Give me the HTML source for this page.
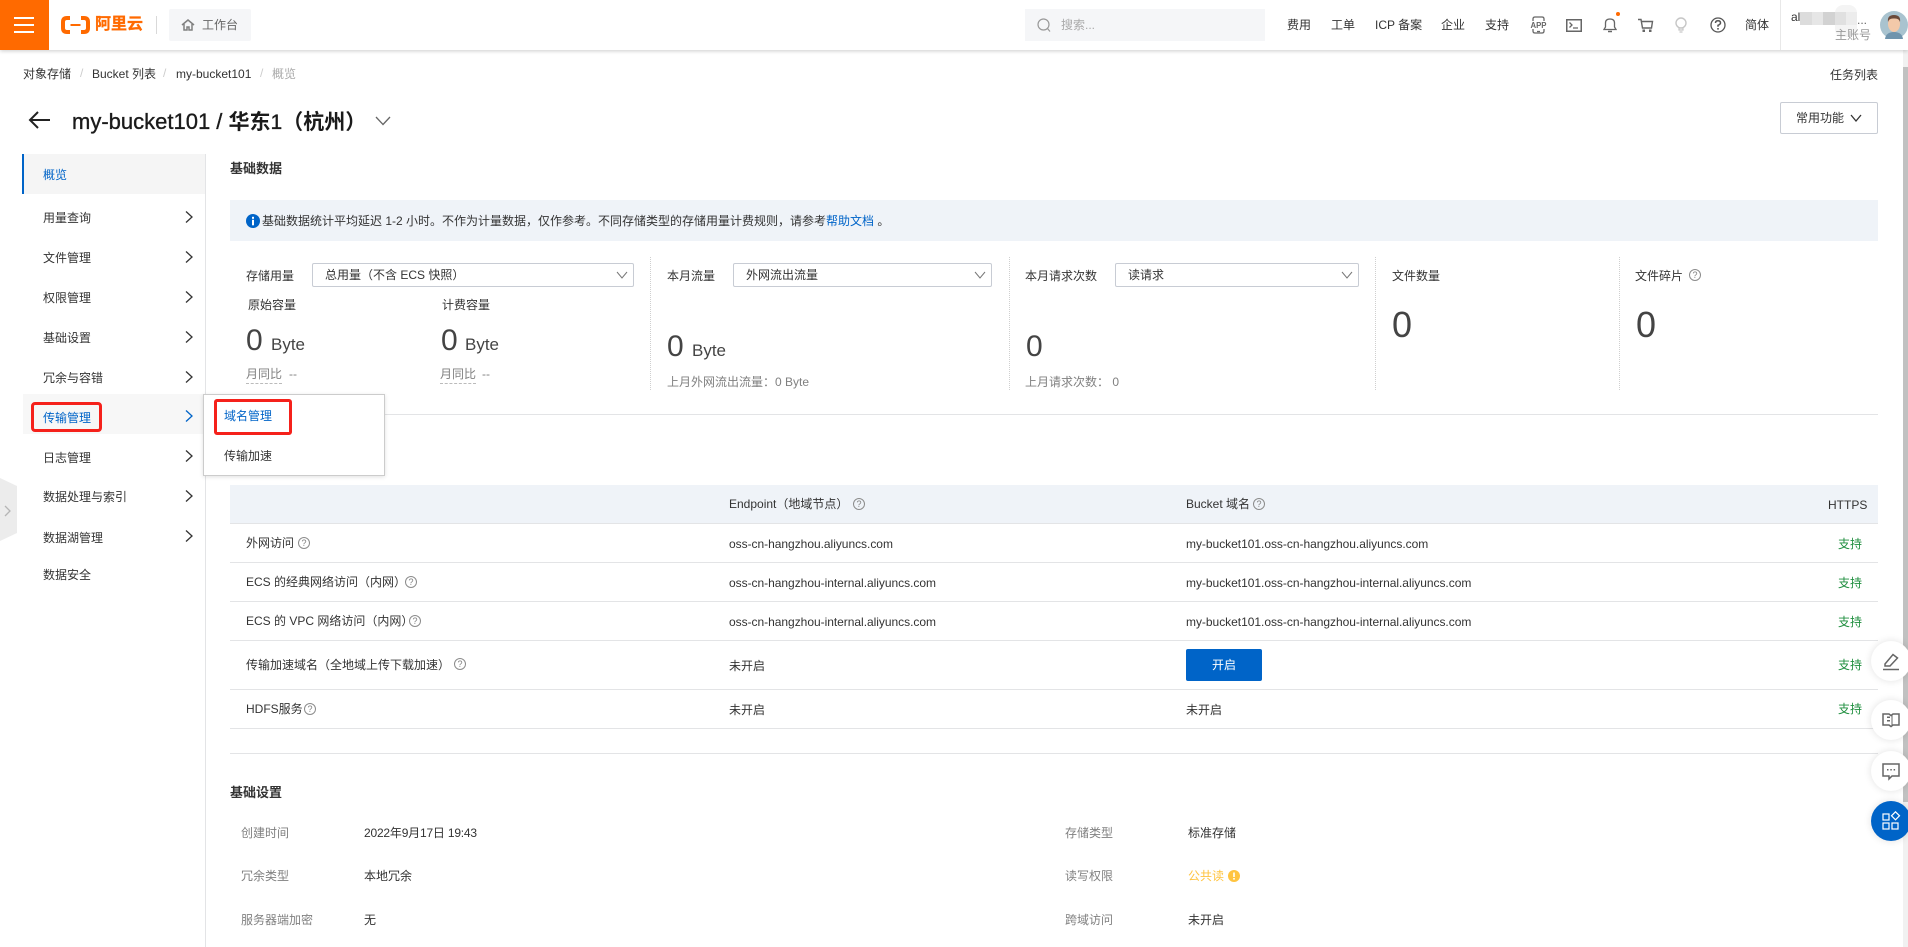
<!DOCTYPE html>
<html lang="zh-CN">
<head>
<meta charset="utf-8">
<title>my-bucket101 概览</title>
<style>
*{box-sizing:border-box}
html,body{margin:0;padding:0;width:1908px;height:947px;overflow:hidden;background:#fff}
body{position:relative;font-family:"Liberation Sans","Noto Sans CJK SC",sans-serif;font-size:12px;color:#333}
.t{position:absolute;white-space:nowrap;line-height:16px;height:16px}
.a{position:absolute}
.g{color:#808080}
.b{color:#0064c8}
.ok{color:#1e8e3e}
.line{position:absolute;height:1px;background:#e3e4e6}
.dv{position:absolute;width:0;border-left:1px dotted #cfcfcf;top:257px;height:133px}
.sel{position:absolute;top:263px;height:24px;border:1px solid #c8ccd4;border-radius:2px;background:#fff;padding-left:12px;line-height:22px;white-space:nowrap}
.sel svg{position:absolute;right:5px;top:5px}
.num{position:absolute;font-size:30px;line-height:36px;height:36px;color:#444}
.byte{position:absolute;font-size:17px;line-height:20px;height:20px;color:#444}
.big{position:absolute;font-size:36px;line-height:44px;height:44px;color:#444}
.dash{border-bottom:1px dashed #bbb;height:18px}
.q{position:absolute;width:12px;height:12px;border:1px solid #8c8c8c;border-radius:50%;font-size:9px;line-height:10px;text-align:center;color:#808080}
.h{font-size:13px;font-weight:700;color:#333}
.fab{position:absolute;left:1871px;width:40px;height:40px;border-radius:50%;background:#fff;box-shadow:0 0 8px rgba(0,0,0,.12)}
.fab svg{position:absolute;left:10px;top:10px}
</style>
</head>
<body>

<!-- scrollbar -->
<div class="a" style="left:1903px;top:50px;width:5px;height:897px;background:#f1f1f1"></div>
<div class="a" style="left:1903px;top:67px;width:5px;height:735px;background:#c1c1c1"></div>

<!-- header -->
<div class="a" style="left:0;top:0;width:1908px;height:50px;background:#fff;box-shadow:0 1px 4px rgba(0,0,0,.2)"></div>
<div class="a" style="left:0;top:0;width:49px;height:50px;background:#ff6a00"></div>
<div class="a" style="left:14px;top:17px;width:20px;height:2px;background:#fff"></div>
<div class="a" style="left:14px;top:24px;width:20px;height:2px;background:#fff"></div>
<div class="a" style="left:14px;top:31px;width:20px;height:2px;background:#fff"></div>

<svg class="a" style="left:60px;top:15px" width="31" height="20" viewBox="0 0 31 20">
<path d="M10 3H7Q3 3 3 7V13Q3 17 7 17H10" fill="none" stroke="#ff6a00" stroke-width="4"/>
<path d="M21 3H24Q28 3 28 7V13Q28 17 24 17H21" fill="none" stroke="#ff6a00" stroke-width="4"/>
<rect x="10.5" y="9" width="10" height="2" fill="#ff6a00"/>
</svg>
<div class="t" style="left:95px;top:13px;height:24px;line-height:24px;font-size:16px;font-weight:700;color:#ff6a00;-webkit-text-stroke:.3px #ff6a00">阿里云</div>
<div class="a" style="left:156px;top:16px;width:1px;height:18px;background:#d9d9d9"></div>
<div class="a" style="left:169px;top:9px;width:82px;height:32px;background:#f5f6f8;border-radius:2px"></div>
<svg class="a" style="left:181px;top:18px" width="14" height="14" viewBox="0 0 14 14"><path d="M1 7L7 2L13 7M3 6V12H6V9H8V12H11V6" fill="none" stroke="#808080" stroke-width="1.5"/></svg>
<div class="t" style="left:202px;top:17px;color:#666">工作台</div>

<div class="a" style="left:1025px;top:9px;width:240px;height:32px;background:#f5f6f8"></div>
<svg class="a" style="left:1037px;top:18px" width="14" height="15" viewBox="0 0 14 15"><circle cx="6.5" cy="6.5" r="5.5" fill="none" stroke="#999" stroke-width="1.2"/><path d="M10.5 10.5L13 13.5" stroke="#999" stroke-width="1.2"/></svg>
<div class="t" style="left:1061px;top:17px;color:#aaa">搜索...</div>
<div class="t" style="left:1287px;top:17px">费用</div>
<div class="t" style="left:1331px;top:17px">工单</div>
<div class="t" style="left:1375px;top:17px">ICP 备案</div>
<div class="t" style="left:1441px;top:17px">企业</div>
<div class="t" style="left:1485px;top:17px">支持</div>
<svg class="a" style="left:1530px;top:16px" width="17" height="18" viewBox="0 0 17 18"><path d="M3 5V3Q3 1 5 1H12Q14 1 14 3V5M3 13V15Q3 17 5 17H12Q14 17 14 15V13M7 15.500H10" fill="none" stroke="#666" stroke-width="1.300"/><text x="8.5" y="11.8" font-size="8" font-weight="700" text-anchor="middle" fill="#666" font-family="Liberation Sans" textLength="16" lengthAdjust="spacingAndGlyphs">APP</text></svg>
<svg class="a" style="left:1566px;top:19px" width="16" height="13" viewBox="0 0 16 13"><rect x=".75" y=".75" width="14.5" height="11.5" fill="none" stroke="#666" stroke-width="1.5"/><path d="M3.5 3.5L6 6L3.5 8.500M7 9H12" fill="none" stroke="#666" stroke-width="1.3"/></svg>
<svg class="a" style="left:1603px;top:17px" width="14" height="16" viewBox="0 0 14 16"><path d="M1 12.500H13L11.500 10V6Q11.500 2 7 2Q2.500 2 2.500 6V10Z" fill="none" stroke="#666" stroke-width="1.300"/><path d="M5 14.500H9" stroke="#666" stroke-width="1.500"/></svg>
<div class="a" style="left:1616px;top:12px;width:4px;height:4px;border-radius:50%;background:#ff6a00"></div>
<svg class="a" style="left:1638px;top:18px" width="16" height="15" viewBox="0 0 16 15"><path d="M0 1.500H3L4.500 10H13.500L14.500 3.500H3.500" fill="none" stroke="#666" stroke-width="1.400"/><rect x="4.500" y="11.500" width="2.500" height="2.500" fill="#666"/><rect x="11" y="11.500" width="2.500" height="2.500" fill="#666"/></svg>
<svg class="a" style="left:1675px;top:17px" width="12" height="16" viewBox="0 0 12 16"><circle cx="6" cy="6" r="5" fill="none" stroke="#c6c6c6" stroke-width="1.400"/><path d="M4 11V13H8V11M4.500 15H7.500" fill="none" stroke="#c6c6c6" stroke-width="1.200"/></svg>
<svg class="a" style="left:1710px;top:17px" width="16" height="16" viewBox="0 0 16 16"><circle cx="8" cy="8" r="7" fill="none" stroke="#555" stroke-width="1.300"/><path d="M5.500 6Q5.500 3.800 8 3.800Q10.500 3.800 10.500 6Q10.500 7.300 8 8.300V9.800" fill="none" stroke="#555" stroke-width="1.500"/><rect x="7.200" y="11" width="1.600" height="1.600" fill="#555"/></svg>
<div class="t" style="left:1745px;top:17px">简体</div>
<div class="a" style="left:1780px;top:0;width:1px;height:50px;background:#e8e8e8"></div>
<div class="t" style="left:1791px;top:9px">al</div>
<div class="a" style="left:1835px;top:5px;width:22px;height:32px;background:#f4f4f4;border-radius:8px"></div>
<div class="a" style="left:1800px;top:12px;width:12px;height:13px;background:#dcdcdc"></div>
<div class="a" style="left:1812px;top:12px;width:11px;height:13px;background:#e6e6e6"></div>
<div class="a" style="left:1823px;top:12px;width:12px;height:13px;background:#d2d2d2"></div>
<div class="a" style="left:1835px;top:12px;width:11px;height:13px;background:#e0e0e0"></div>
<div class="a" style="left:1846px;top:12px;width:11px;height:13px;background:#ececec"></div>
<div class="t" style="left:1857px;top:12px;color:#666">...</div>
<div class="t" style="left:1835px;top:27px;color:#999">主账号</div>
<svg class="a" style="left:1880px;top:11px" width="28" height="28" viewBox="0 0 28 28"><circle cx="14" cy="14" r="14" fill="#a9c3cf"/><path d="M5 28Q6 21 14 21Q22 21 23 28Z" fill="#6f94ad"/><ellipse cx="14" cy="13" rx="6" ry="8" fill="#f3c9a9"/><path d="M8 11Q7 4 14 4Q21 4 20 11Q19 7 14 7.500Q9 7 8 11Z" fill="#6b4a3a"/></svg>

<!-- breadcrumb -->
<div class="t" style="left:23px;top:66px">对象存储</div>
<div class="t" style="left:80px;top:65px;color:#ccc">/</div>
<div class="t" style="left:92px;top:66px">Bucket 列表</div>
<div class="t" style="left:163px;top:65px;color:#ccc">/</div>
<div class="t" style="left:176px;top:66px">my-bucket101</div>
<div class="t" style="left:260px;top:65px;color:#ccc">/</div>
<div class="t" style="left:272px;top:66px;color:#aaa">概览</div>
<div class="t" style="left:1830px;top:67px">任务列表</div>

<!-- title -->
<svg class="a" style="left:28px;top:110px" width="23" height="20" viewBox="0 0 23 20"><path d="M22 10H2M10 2L2 10L10 18" fill="none" stroke="#222" stroke-width="2"/></svg>
<div class="t" style="left:72px;top:108px;height:28px;line-height:28px;font-size:22px;color:#1a1a1a;-webkit-text-stroke:.35px #1a1a1a">my-bucket101 / <b style="font-size:21px;-webkit-text-stroke:0">华东</b><span style="font-size:21px">1</span><b style="font-size:21px;-webkit-text-stroke:0">（杭州）</b></div>
<svg class="a" style="left:375px;top:116px" width="16" height="10" viewBox="0 0 16 10"><path d="M1 1L8 8.500L15 1" fill="none" stroke="#666" stroke-width="1.300"/></svg>
<div class="a" style="left:1780px;top:102px;width:98px;height:32px;border:1px solid #c8ccd4;border-radius:2px"></div>
<div class="t" style="left:1796px;top:110px">常用功能</div>
<svg class="a" style="left:1850px;top:114px" width="12" height="8" viewBox="0 0 12 8"><path d="M1 1L6 7L11 1" fill="none" stroke="#333" stroke-width="1.300"/></svg>

<!-- sidebar -->
<div class="a" style="left:205px;top:154px;width:1px;height:793px;background:#e3e4e6"></div>
<div class="a" style="left:22px;top:154px;width:183px;height:40px;background:#f5f5f5;border-left:2px solid #0064c8"></div>
<div class="t b" style="left:43px;top:167px">概览</div>
<div class="t" style="left:43px;top:210px">用量查询</div>
<div class="t" style="left:43px;top:250px">文件管理</div>
<div class="t" style="left:43px;top:290px">权限管理</div>
<div class="t" style="left:43px;top:330px">基础设置</div>
<div class="t" style="left:43px;top:370px">冗余与容错</div>
<div class="a" style="left:23px;top:394px;width:182px;height:40px;background:#f7f7f7"></div>
<div class="t b" style="left:43px;top:410px">传输管理</div>
<div class="t" style="left:43px;top:450px">日志管理</div>
<div class="t" style="left:43px;top:489px">数据处理与索引</div>
<div class="t" style="left:43px;top:530px">数据湖管理</div>
<div class="t" style="left:43px;top:567px">数据安全</div>
<svg class="a" style="left:184px;top:210px" width="10" height="14" viewBox="0 0 10 14"><path d="M2 1.500L8 7L2 12.500" fill="none" stroke="#333" stroke-width="1.300"/></svg>
<svg class="a" style="left:184px;top:250px" width="10" height="14" viewBox="0 0 10 14"><path d="M2 1.500L8 7L2 12.500" fill="none" stroke="#333" stroke-width="1.300"/></svg>
<svg class="a" style="left:184px;top:290px" width="10" height="14" viewBox="0 0 10 14"><path d="M2 1.500L8 7L2 12.500" fill="none" stroke="#333" stroke-width="1.300"/></svg>
<svg class="a" style="left:184px;top:330px" width="10" height="14" viewBox="0 0 10 14"><path d="M2 1.500L8 7L2 12.500" fill="none" stroke="#333" stroke-width="1.300"/></svg>
<svg class="a" style="left:184px;top:370px" width="10" height="14" viewBox="0 0 10 14"><path d="M2 1.500L8 7L2 12.500" fill="none" stroke="#333" stroke-width="1.300"/></svg>
<svg class="a" style="left:184px;top:409px" width="10" height="14" viewBox="0 0 10 14"><path d="M2 1.500L8 7L2 12.500" fill="none" stroke="#0064c8" stroke-width="1.300"/></svg>
<svg class="a" style="left:184px;top:449px" width="10" height="14" viewBox="0 0 10 14"><path d="M2 1.500L8 7L2 12.500" fill="none" stroke="#333" stroke-width="1.300"/></svg>
<svg class="a" style="left:184px;top:489px" width="10" height="14" viewBox="0 0 10 14"><path d="M2 1.500L8 7L2 12.500" fill="none" stroke="#333" stroke-width="1.300"/></svg>
<svg class="a" style="left:184px;top:529px" width="10" height="14" viewBox="0 0 10 14"><path d="M2 1.500L8 7L2 12.500" fill="none" stroke="#333" stroke-width="1.300"/></svg>
<svg class="a" style="left:0;top:478px" width="17" height="65" viewBox="0 0 17 65"><path d="M0 0L17 8V55L0 63Z" fill="#ececec"/><path d="M5 28L10 33L5 38" fill="none" stroke="#b5b5b5" stroke-width="1.300"/></svg>

<!-- basic data -->
<div class="t h" style="left:230px;top:161px">基础数据</div>
<div class="a" style="left:230px;top:200px;width:1648px;height:41px;background:#eff3f8"></div>
<svg class="a" style="left:246px;top:214px" width="14" height="14" viewBox="0 0 14 14"><circle cx="7" cy="7" r="7" fill="#0064c8"/><rect x="6" y="5.800" width="2" height="5.500" fill="#fff"/><rect x="6" y="2.800" width="2" height="2" fill="#fff"/></svg>
<div class="t" style="left:262px;top:213px">基础数据统计平均延迟 1-2 小时。不作为计量数据，仅作参考。不同存储类型的存储用量计费规则，请参考<span class="b">帮助文档</span> 。</div>

<div class="t" style="left:246px;top:268px">存储用量</div>
<div class="sel" style="left:312px;width:322px">总用量（不含 ECS 快照）<svg width="12" height="12" viewBox="0 0 12 12"><path d="M1 3L6 9L11 3" fill="none" stroke="#777" stroke-width="1"/></svg></div>
<div class="t" style="left:248px;top:297px">原始容量</div>
<div class="t" style="left:442px;top:297px">计费容量</div>
<div class="num" style="left:246px;top:323px">0</div>
<div class="byte" style="left:271px;top:335px">Byte</div>
<div class="num" style="left:441px;top:323px">0</div>
<div class="byte" style="left:465px;top:335px">Byte</div>
<div class="t g dash" style="left:246px;top:366px">月同比</div>
<div class="t g" style="left:289px;top:366px">--</div>
<div class="t g dash" style="left:440px;top:366px">月同比</div>
<div class="t g" style="left:482px;top:366px">--</div>

<div class="dv" style="left:650px"></div>
<div class="t" style="left:667px;top:268px">本月流量</div>
<div class="sel" style="left:733px;width:259px">外网流出流量<svg width="12" height="12" viewBox="0 0 12 12"><path d="M1 3L6 9L11 3" fill="none" stroke="#777" stroke-width="1"/></svg></div>
<div class="num" style="left:667px;top:329px">0</div>
<div class="byte" style="left:692px;top:341px">Byte</div>
<div class="t g" style="left:667px;top:374px">上月外网流出流量：0 Byte</div>

<div class="dv" style="left:1009px"></div>
<div class="t" style="left:1025px;top:268px">本月请求次数</div>
<div class="sel" style="left:1115px;width:244px">读请求<svg width="12" height="12" viewBox="0 0 12 12"><path d="M1 3L6 9L11 3" fill="none" stroke="#777" stroke-width="1"/></svg></div>
<div class="num" style="left:1026px;top:329px">0</div>
<div class="t g" style="left:1025px;top:374px">上月请求次数： 0</div>

<div class="dv" style="left:1375px"></div>
<div class="t" style="left:1392px;top:268px">文件数量</div>
<div class="big" style="left:1392px;top:303px">0</div>

<div class="dv" style="left:1619px"></div>
<div class="t" style="left:1635px;top:268px">文件碎片</div>
<div class="q" style="left:1689px;top:269px">?</div>
<div class="big" style="left:1636px;top:303px">0</div>

<div class="line" style="left:230px;top:414px;width:1648px"></div>

<!-- table -->
<div class="a" style="left:230px;top:485px;width:1648px;height:38px;background:#eff3f8"></div>
<div class="line" style="left:230px;top:523px;width:1648px"></div>
<div class="line" style="left:230px;top:562px;width:1648px"></div>
<div class="line" style="left:230px;top:601px;width:1648px"></div>
<div class="line" style="left:230px;top:640px;width:1648px"></div>
<div class="line" style="left:230px;top:689px;width:1648px"></div>
<div class="line" style="left:230px;top:728px;width:1648px"></div>

<div class="t" style="left:729px;top:496px">Endpoint（地域节点）</div>
<div class="q" style="left:853px;top:498px">?</div>
<div class="t" style="left:1186px;top:496px">Bucket 域名</div>
<div class="q" style="left:1253px;top:498px">?</div>
<div class="t" style="left:1828px;top:497px">HTTPS</div>

<div class="t" style="left:246px;top:535px">外网访问</div>
<div class="q" style="left:298px;top:537px">?</div>
<div class="t" style="left:729px;top:536px;letter-spacing:-.03px">oss-cn-hangzhou.aliyuncs.com</div>
<div class="t" style="left:1186px;top:536px;letter-spacing:-.03px">my-bucket101.oss-cn-hangzhou.aliyuncs.com</div>
<div class="t ok" style="left:1838px;top:536px">支持</div>

<div class="t" style="left:246px;top:574px">ECS 的经典网络访问（内网）</div>
<div class="q" style="left:405px;top:576px">?</div>
<div class="t" style="left:729px;top:575px;letter-spacing:-.03px">oss-cn-hangzhou-internal.aliyuncs.com</div>
<div class="t" style="left:1186px;top:575px;letter-spacing:-.03px">my-bucket101.oss-cn-hangzhou-internal.aliyuncs.com</div>
<div class="t ok" style="left:1838px;top:575px">支持</div>

<div class="t" style="left:246px;top:613px">ECS 的 VPC 网络访问（内网）</div>
<div class="q" style="left:409px;top:615px">?</div>
<div class="t" style="left:729px;top:614px;letter-spacing:-.03px">oss-cn-hangzhou-internal.aliyuncs.com</div>
<div class="t" style="left:1186px;top:614px;letter-spacing:-.03px">my-bucket101.oss-cn-hangzhou-internal.aliyuncs.com</div>
<div class="t ok" style="left:1838px;top:614px">支持</div>

<div class="t" style="left:246px;top:657px">传输加速域名（全地域上传下载加速）</div>
<div class="q" style="left:454px;top:658px">?</div>
<div class="t" style="left:729px;top:658px">未开启</div>
<div class="a" style="left:1186px;top:649px;width:76px;height:32px;background:#0064c8;border-radius:2px;color:#fff;text-align:center;line-height:32px">开启</div>
<div class="t ok" style="left:1838px;top:657px">支持</div>

<div class="t" style="left:246px;top:701px">HDFS服务</div>
<div class="q" style="left:304px;top:703px">?</div>
<div class="t" style="left:729px;top:702px">未开启</div>
<div class="t" style="left:1186px;top:702px">未开启</div>
<div class="t ok" style="left:1838px;top:701px">支持</div>

<div class="line" style="left:230px;top:753px;width:1648px"></div>

<!-- basic settings -->
<div class="t h" style="left:230px;top:785px">基础设置</div>
<div class="t g" style="left:241px;top:825px">创建时间</div>
<div class="t" style="left:364px;top:825px;letter-spacing:-.2px">2022年9月17日 19:43</div>
<div class="t g" style="left:1065px;top:825px">存储类型</div>
<div class="t" style="left:1188px;top:825px">标准存储</div>
<div class="t g" style="left:241px;top:868px">冗余类型</div>
<div class="t" style="left:364px;top:868px">本地冗余</div>
<div class="t g" style="left:1065px;top:868px">读写权限</div>
<div class="t" style="left:1188px;top:868px;color:#ffc440">公共读</div>
<svg class="a" style="left:1228px;top:870px" width="12" height="12" viewBox="0 0 12 12"><circle cx="6" cy="6" r="6" fill="#ffc440"/><rect x="5.200" y="2.500" width="1.600" height="4.500" fill="#fff"/><rect x="5.200" y="8" width="1.600" height="1.600" fill="#fff"/></svg>
<div class="t g" style="left:241px;top:912px">服务器端加密</div>
<div class="t" style="left:364px;top:912px">无</div>
<div class="t g" style="left:1065px;top:912px">跨域访问</div>
<div class="t" style="left:1188px;top:912px">未开启</div>

<!-- popup -->
<div class="a" style="left:203px;top:394px;width:182px;height:82px;background:#fff;border:1px solid #ccc;box-shadow:0 1px 4px rgba(0,0,0,.12)"></div>
<div class="t b" style="left:224px;top:408px">域名管理</div>
<div class="t" style="left:224px;top:448px">传输加速</div>

<!-- red annotations -->
<div class="a" style="left:31px;top:402px;width:71px;height:30px;border:3px solid #f5211b;border-radius:4px"></div>
<div class="a" style="left:214px;top:399px;width:78px;height:36px;border:3px solid #f5211b;border-radius:3px"></div>

<!-- floating buttons -->
<div class="fab" style="top:641px"><svg width="20" height="20" viewBox="0 0 20 20"><path d="M4 13L12 3.500L16.500 7L9 15H4Z" fill="none" stroke="#666" stroke-width="1.500"/><path d="M2 18.500H18" stroke="#666" stroke-width="1.500"/></svg></div>
<div class="fab" style="top:700px"><svg width="20" height="20" viewBox="0 0 20 20"><path d="M2 4H8L10 5.500L12 4H18V15H12L10 16.500L8 15H2Z" fill="none" stroke="#666" stroke-width="1.500"/><rect x="6" y="6.500" width="3" height="1.500" fill="#666"/><rect x="6" y="10" width="3" height="1.500" fill="#666"/><path d="M11 5V15" stroke="#666" stroke-width="1"/></svg></div>
<div class="fab" style="top:751px"><svg width="20" height="20" viewBox="0 0 20 20"><path d="M2 3H18V15H11L8 18V15H2Z" fill="none" stroke="#666" stroke-width="1.500"/><rect x="6" y="8" width="1.500" height="1.500" fill="#666"/><rect x="9.300" y="8" width="1.500" height="1.500" fill="#666"/><rect x="12.600" y="8" width="1.500" height="1.500" fill="#666"/></svg></div>
<div class="fab" style="top:801px;background:#0064c8"><svg width="20" height="20" viewBox="0 0 20 20"><rect x="2" y="3" width="6" height="6" fill="none" stroke="#fff" stroke-width="1.200"/><rect x="2" y="12" width="6" height="6" fill="none" stroke="#fff" stroke-width="1.200"/><rect x="11" y="12" width="6" height="6" fill="none" stroke="#fff" stroke-width="1.200"/><path d="M14.500 0.800L18.500 4.800L14.500 8.800L10.500 4.800Z" fill="none" stroke="#fff" stroke-width="1.200"/></svg></div>

</body>
</html>
